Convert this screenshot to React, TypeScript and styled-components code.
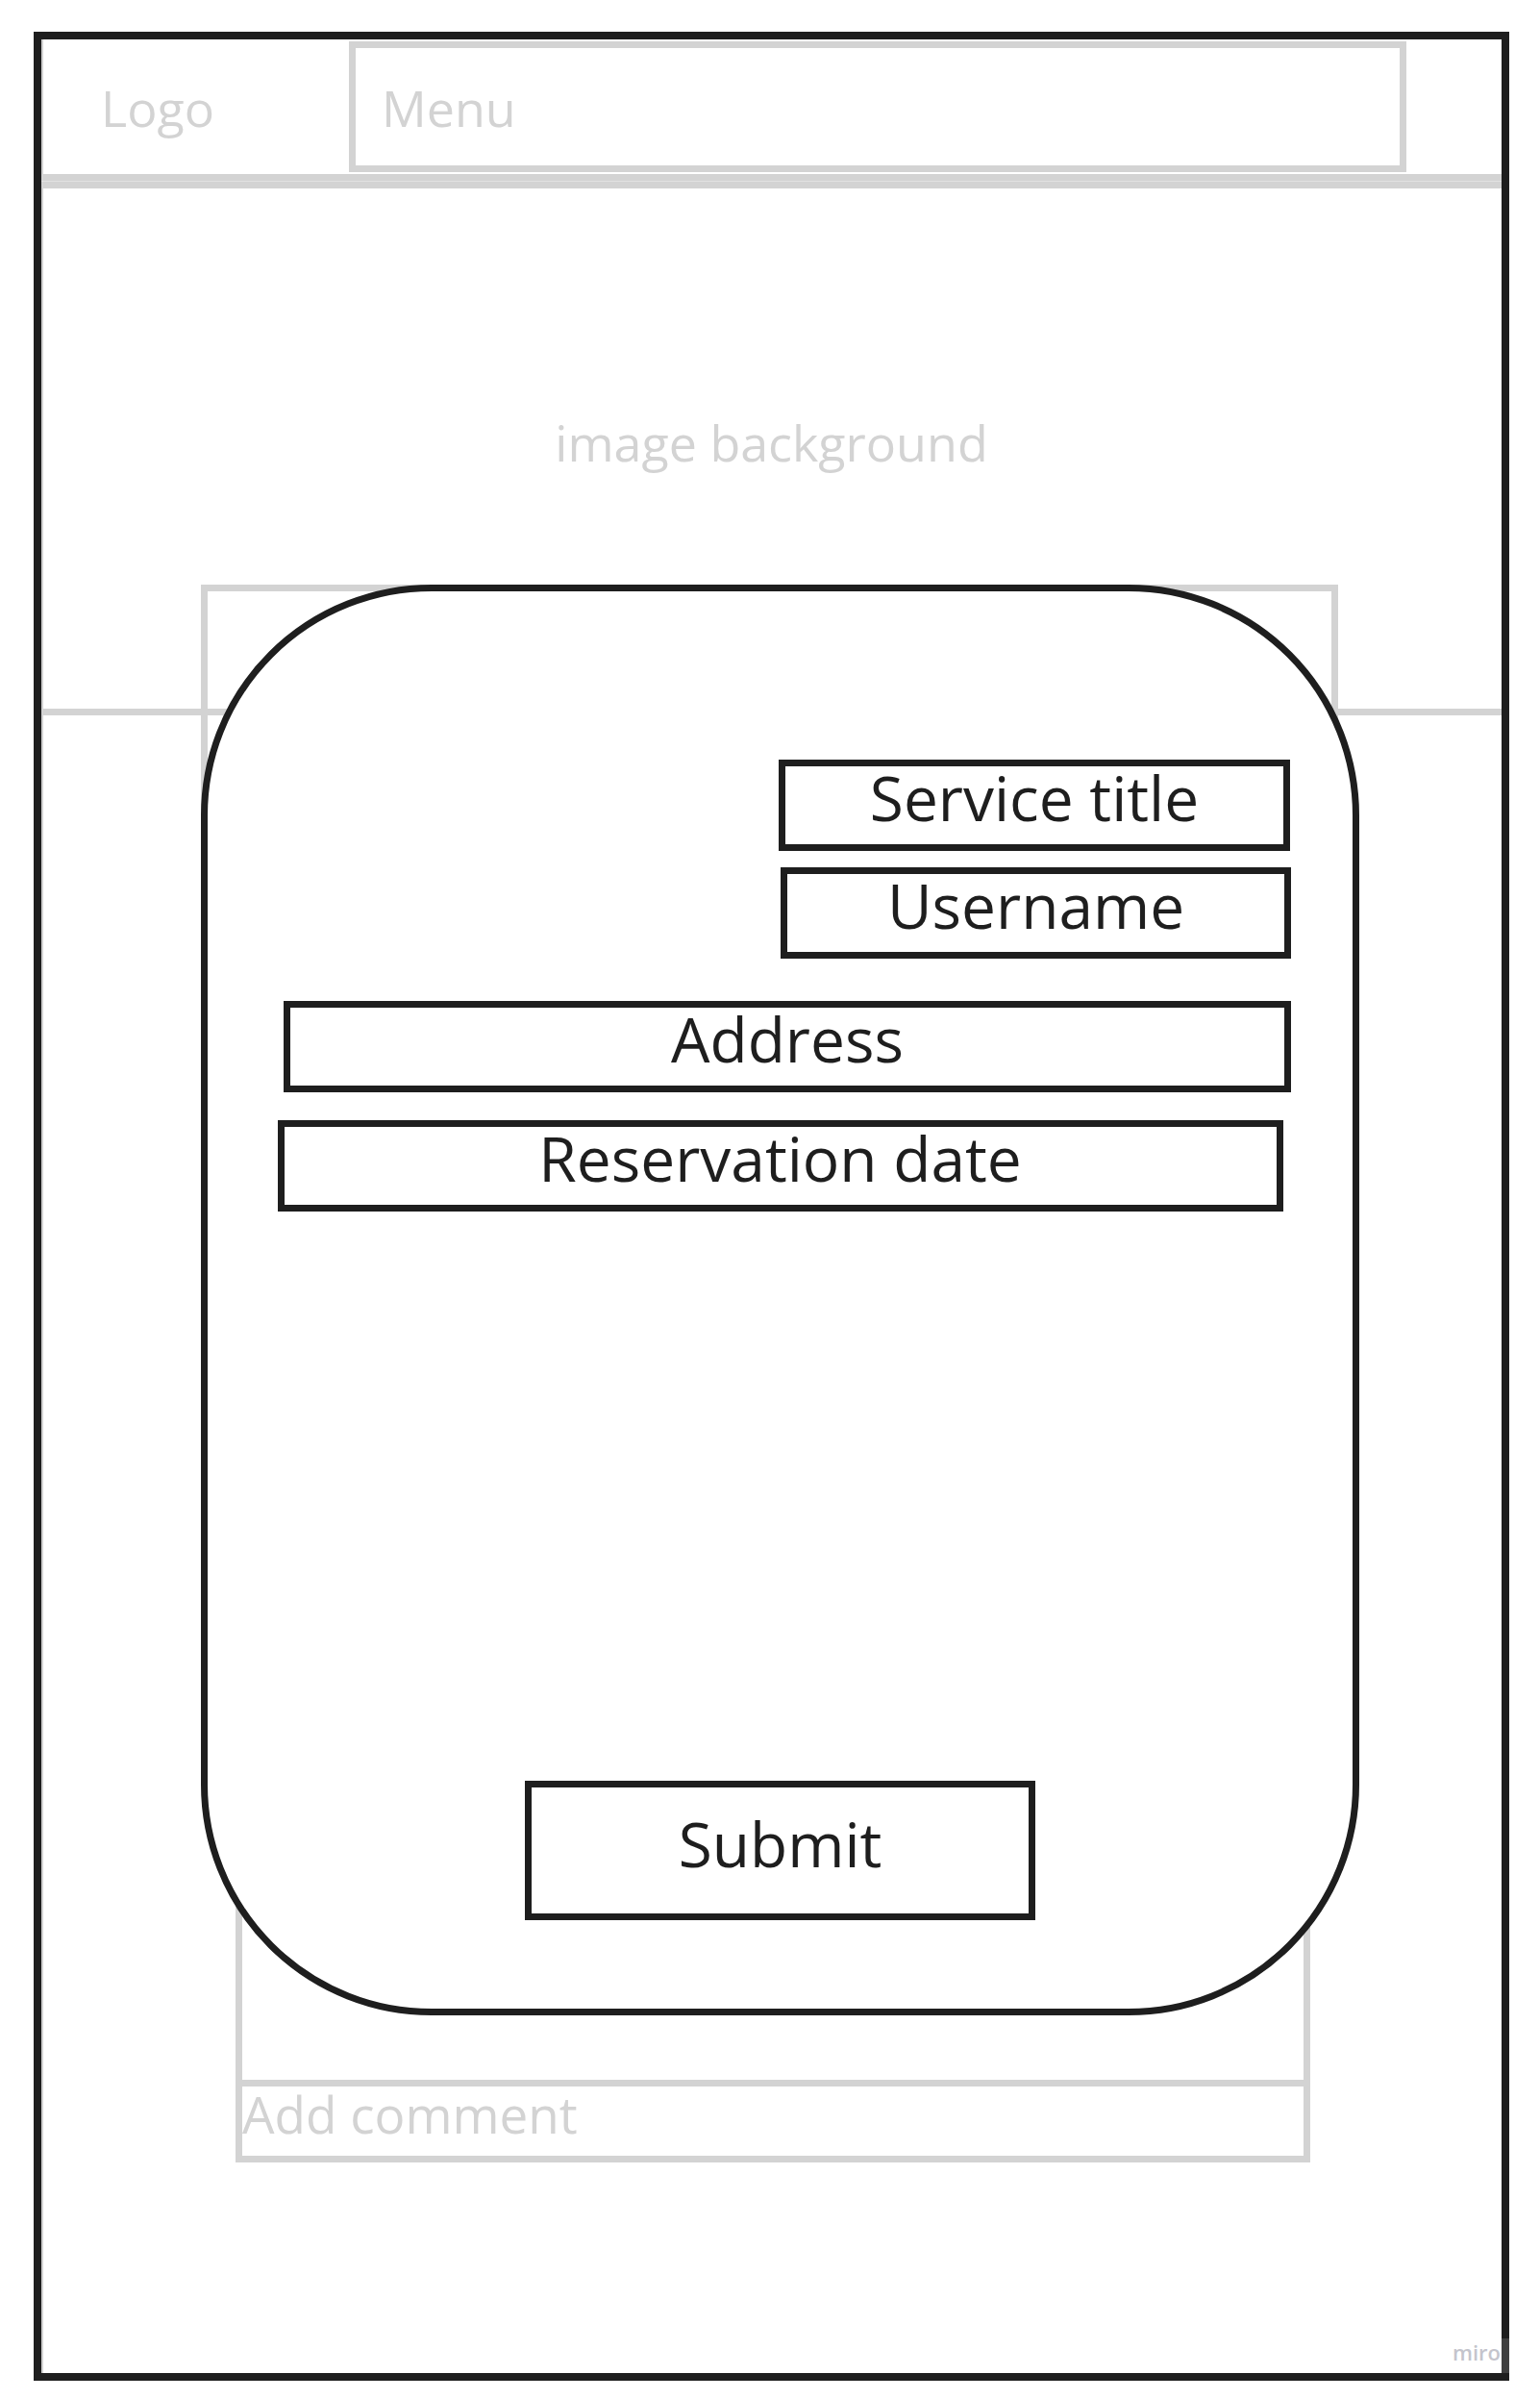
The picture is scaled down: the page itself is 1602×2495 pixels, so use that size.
import styled, { createGlobalStyle } from "styled-components";

const ink = "#1e1e1e";
const wire = "#d3d3d3";

type FieldProps = {
  $width: number;
  $height?: number;
  $top?: number;
  $right?: number;
  $align?: "flex-end" | "center";
};

const fields: { label: string; width: number; top: number; right?: number; align: "flex-end" | "center" }[] = [
  { label: "Service title", width: 532, top: 0, right: 65, align: "flex-end" },
  { label: "Username", width: 531, top: 17, right: 64, align: "flex-end" },
  { label: "Address", width: 1048, top: 44, right: 64, align: "flex-end" },
  { label: "Reservation date", width: 1046, top: 29, align: "center" },
];

const App = () => {
  return (
    <>
      <GlobalStyle />
      <Page>
        <Frame>
          <Header>
            <Logo>Logo</Logo>
            <MenuBox>Menu</MenuBox>
          </Header>
          <HeaderRule />
          <Hero>image background</Hero>
          <DetailBox />
          <CommentsBox />
          <AddComment>
            <CommentText>Add comment</CommentText>
          </AddComment>

          <Card>
            {fields.map((f) => (
              <Field key={f.label} $width={f.width} $top={f.top} $right={f.right} $align={f.align}>
                {f.label}
              </Field>
            ))}
            <SubmitButton $width={531} $height={145} $top={592} $align="center">
              Submit
            </SubmitButton>
          </Card>

          <Watermark>miro</Watermark>
        </Frame>
      </Page>
    </>
  );
};

const GlobalStyle = createGlobalStyle`
  * {
    box-sizing: border-box;
  }
  body {
    margin: 0;
    background: #ffffff;
    font-family: "Open Sans", "Noto Sans", sans-serif;
  }
`;

const Page = styled.div`
  padding: 33px 0 0 35px;
  width: 1602px;
  height: 2495px;
`;

const Frame = styled.div`
  position: relative;
  width: 1535px;
  height: 2443px;
  border: 8px solid ${ink};
  box-shadow: inset 2px 0 0 ${wire};
  display: flex;
  flex-direction: column;
`;

const Header = styled.header`
  display: flex;
  align-items: center;
  height: 140px;
`;

const Logo = styled.div`
  width: 320px;
  padding-left: 62px;
  font-size: 52px;
  color: ${wire};
`;

const MenuBox = styled.nav`
  width: 1100px;
  height: 136px;
  border: 7px solid ${wire};
  padding-left: 27px;
  display: flex;
  align-items: center;
  font-size: 52px;
  color: ${wire};
`;

const HeaderRule = styled.div`
  height: 15px;
  border-top: 7px solid ${wire};
  border-bottom: 7px solid ${wire};
  background: #e2e2e2;
`;

const Hero = styled.section`
  height: 548px;
  padding-top: 228px;
  border-bottom: 7px solid ${wire};
  text-align: center;
  font-size: 52px;
  color: ${wire};
`;

const DetailBox = styled.div`
  margin-top: -136px;
  margin-left: 166px;
  width: 1183px;
  height: 700px;
  border: 7px solid ${wire};
`;

const CommentsBox = styled.div`
  margin-left: 202px;
  width: 1118px;
  height: 862px;
  border: 7px solid ${wire};
`;

const AddComment = styled.div`
  margin-top: -7px;
  margin-left: 202px;
  width: 1118px;
  height: 86px;
  border: 7px solid ${wire};
  padding-top: 2px;
`;

const CommentText = styled.div`
  font-size: 53px;
  line-height: 1;
  color: ${wire};
`;

const Card = styled.div`
  position: absolute;
  left: 166px;
  top: 567px;
  width: 1205px;
  height: 1488px;
  border: 7px solid ${ink};
  border-radius: 240px;
  background: #ffffff;
  padding-top: 175px;
  display: flex;
  flex-direction: column;
`;

const Field = styled.div<FieldProps>`
  align-self: ${(p) => p.$align || "center"};
  width: ${(p) => p.$width}px;
  height: ${(p) => p.$height || 95}px;
  margin-top: ${(p) => p.$top || 0}px;
  margin-right: ${(p) => p.$right || 0}px;
  border: 7px solid ${ink};
  padding-bottom: 16px;
  display: flex;
  align-items: center;
  justify-content: center;
  font-size: 64px;
  color: ${ink};
  white-space: nowrap;
`;

const SubmitButton = styled(Field)`
  padding-bottom: 14px;
`;

const Watermark = styled.div`
  position: absolute;
  right: -8px;
  bottom: 0;
  width: 67px;
  height: 36px;
  padding: 3px 0 0 8px;
  background: rgba(255, 255, 255, 0.15);
  font-size: 22px;
  font-weight: 600;
  line-height: 1;
  color: #c4c4cc;
  white-space: nowrap;
`;

export default App;
